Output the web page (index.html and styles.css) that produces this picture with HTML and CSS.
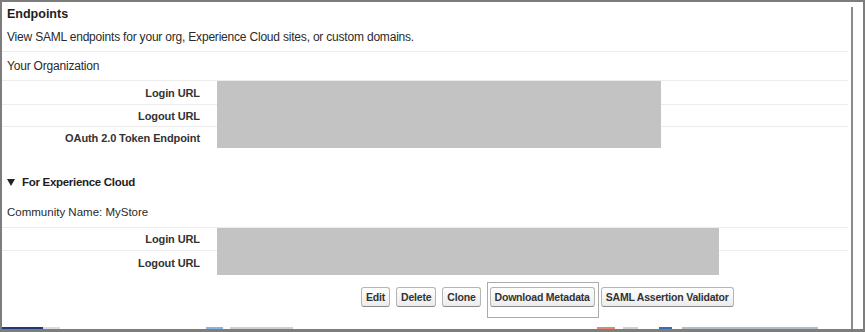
FILE: index.html
```html
<!DOCTYPE html>
<html lang="en">
<head>
<meta charset="utf-8">
<title>Endpoints</title>
<link rel="stylesheet" href="styles.css">
</head>
<body>
<div class="window">
  <main class="panel">
    <h1 class="title">Endpoints</h1>
    <p class="desc">View SAML endpoints for your org, Experience Cloud sites, or custom domains.</p>
    <div class="group-name">Your Organization</div>
    <div class="grid grid-org">
      <div class="label">Login URL</div><div class="value"></div><div class="rest"></div>
      <div class="label">Logout URL</div><div class="value"></div><div class="rest"></div>
      <div class="label">OAuth 2.0 Token Endpoint</div><div class="value"></div><div class="rest"></div>
    </div>
    <h2 class="section"><span class="tri"></span>For Experience Cloud</h2>
    <div class="group-name community">Community Name: MyStore</div>
    <div class="grid grid-comm">
      <div class="label">Login URL</div><div class="value"></div><div class="rest"></div>
      <div class="label">Logout URL</div><div class="value"></div><div class="rest"></div>
    </div>
    <div class="buttons">
      <button class="btn">Edit</button>
      <button class="btn">Delete</button>
      <button class="btn">Clone</button>
      <div class="focus"><button class="btn">Download Metadata</button></div>
      <button class="btn">SAML Assertion Validator</button>
    </div>
    <div class="strip"></div>
  </main>
  <div class="scroll"></div>
</div>
</body>
</html>
```
FILE: styles.css
```css
* { box-sizing: border-box; }
html, body { margin: 0; padding: 0; }
body {
  width: 865px;
  height: 332px;
  overflow: hidden;
  background: #fff;
  font-family: "Liberation Sans", Arial, sans-serif;
  color: #2a2a2a;
}
.window {
  width: 865px;
  height: 332px;
  border-style: solid;
  border-color: #7d7d7d;
  border-width: 2px 2px 3px 2px;
  display: flex;
}
.panel {
  width: 849px;
  display: flex;
  flex-direction: column;
  padding-right: 3px;
}
.scroll {
  width: 12px;
  margin-top: 5px;
  border-left: 2px solid #8c8c8c;
}
.title {
  margin: 0;
  height: 24px;
  line-height: 24px;
  padding-left: 5px;
  font-size: 12.5px;
  font-weight: bold;
  color: #1e1e1e;
}
.desc {
  margin: 0;
  height: 26px;
  line-height: 22px;
  padding-left: 5px;
  font-size: 12px;
  letter-spacing: -0.2px;
  border-bottom: 1px solid #ececec;
}
.group-name {
  height: 29px;
  line-height: 28px;
  padding-left: 5px;
  font-size: 12px;
  letter-spacing: -0.2px;
  border-bottom: 1px solid #ececec;
}
.grid {
  display: grid;
}
.grid-org {
  grid-template-columns: 215px 444px 1fr;
  grid-template-rows: 24px 22px 21px;
}
.grid-comm {
  grid-template-columns: 215px 502px 1fr;
  grid-template-rows: 23px 24px;
}
.label {
  display: flex;
  align-items: center;
  justify-content: flex-end;
  padding-right: 17px;
  font-size: 11px;
  font-weight: bold;
  letter-spacing: -0.1px;
  color: #333;
  border-bottom: 1px solid #ececec;
}
.value {
  background: #c3c3c3;
}
.rest {
  border-bottom: 1px solid #ececec;
}
.grid > :nth-last-child(-n+3) {
  border-bottom: none;
}
.section {
  margin: 0;
  height: 46px;
  padding: 22px 0 0 5px;
  display: flex;
  align-items: center;
  font-size: 11.5px;
  font-weight: bold;
  letter-spacing: -0.3px;
  color: #1e1e1e;
}
.tri {
  width: 0;
  height: 0;
  border-left: 4px solid transparent;
  border-right: 4px solid transparent;
  border-top: 7px solid #222;
  margin-right: 7px;
}
.community {
  height: 34px;
  padding-top: 5px;
  line-height: 26px;
  font-size: 11.5px;
  letter-spacing: 0;
}
.buttons {
  display: flex;
  align-items: flex-start;
  gap: 6px;
  padding: 12px 0 0 359px;
}
.btn {
  height: 20px;
  padding: 0 4px;
  margin: 0;
  font-family: "Liberation Sans", Arial, sans-serif;
  font-size: 10.5px;
  font-weight: bold;
  letter-spacing: -0.2px;
  color: #333;
  border: 1px solid #b5b5b5;
  border-bottom-color: #8a8a8a;
  border-radius: 3px;
  background: linear-gradient(#ffffff, #ececec);
}
.focus {
  display: flex;
  border: 1px solid #ababab;
  padding: 4px 3px 10px 2px;
  margin: -5px -4px -11px 0;
}
.strip {
  margin-top: auto;
  height: 2px;
  background: linear-gradient(to right,
    #1e3a78 0 41px, #dcdcdc 41px 58px, transparent 58px 204px,
    #8ab4e0 204px 221px, transparent 221px 228px,
    #d0d0d0 228px 291px, transparent 291px 595px,
    #e08a6a 595px 613px, transparent 613px 621px,
    #d0d0d0 621px 636px, transparent 636px 657px,
    #3a6db5 657px 670px, transparent 670px 680px,
    #b4bcc8 680px 816px, transparent 816px);
}
```
